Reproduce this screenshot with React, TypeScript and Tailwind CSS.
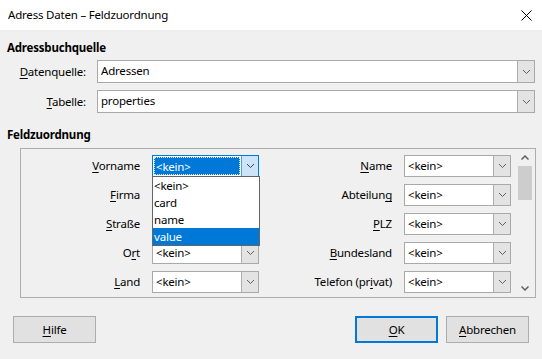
import React from 'react';

const font = { fontFamily: '"Noto Sans", "Liberation Sans", sans-serif' };

function Chevron({ color = '#606060' }: { color?: string }) {
  return (
    <svg width="9" height="6" viewBox="0 0 9 6">
      <path d="M1 1 L4.5 4.5 L8 1" fill="none" stroke={color} strokeWidth="1" />
    </svg>
  );
}

function Mn({ t, i }: { t: string; i: number }) {
  return (
    <>
      {t.slice(0, i)}
      <u className="underline-offset-2">{t[i]}</u>
      {t.slice(i + 1)}
    </>
  );
}

function Combo({ value, className = '' }: { value: string; className?: string }) {
  return (
    <div className={`flex h-[22px] border border-[#a9a9a9] bg-white ${className}`}>
      <div className="flex-1 pl-[3px] leading-[20px] truncate">{value}</div>
      <div className="w-[17px] flex items-center justify-center bg-[#e3e3e3] border-l border-[#adadad]">
        <Chevron />
      </div>
    </div>
  );
}

function OpenCombo() {
  return (
    <div className="relative w-[107px]">
      <div className="flex h-[22px] border border-[#0078d7] bg-white">
        <div className="flex-1 p-[1px]">
          <div className="h-full bg-[#0078d7] text-white leading-[18px] pl-[1px] border border-dotted border-[#d8e6f5]">
            &lt;kein&gt;
          </div>
        </div>
        <div className="w-[17px] flex items-center justify-center bg-[#cce4f7] border-l border-[#569de5]">
          <Chevron color="#404040" />
        </div>
      </div>
      <div className="absolute left-0 top-[21px] w-[108px] bg-white border border-[#646464] z-10">
        {['<kein>', 'card', 'name', 'value'].map((o) => (
          <div
            key={o}
            className={`h-[17px] leading-[17px] pl-[1px] ${o === 'value' ? 'bg-[#0078d7] text-white' : ''}`}
          >
            {o}
          </div>
        ))}
      </div>
    </div>
  );
}

const rows: [string, number, string, number][] = [
  ['Vorname', 0, 'Name', 0],
  ['Firma', 0, 'Abteilung', 8],
  ['Straße', 0, 'PLZ', 0],
  ['Ort', 1, 'Bundesland', 0],
  ['Land', 0, 'Telefon (privat)', 11],
];

function Btn({ children, primary }: { children: React.ReactNode; primary?: boolean }) {
  return (
    <div
      className={`w-[83px] h-[27px] flex items-center justify-center bg-[#e1e1e1] ${
        primary ? 'border-2 border-[#0078d7]' : 'border border-[#adadad]'
      }`}
    >
      {children}
    </div>
  );
}

export default function App() {
  return (
    <div
      className="w-[542px] h-[359px] text-[11.5px] tracking-[-0.2px] text-black overflow-hidden"
      style={font}
    >
      {/* Title bar */}
      <div className="h-[30px] bg-white flex items-center justify-between pl-[8px] pr-[10px]">
        <span>Adress Daten – Feldzuordnung</span>
        <svg width="11" height="11" viewBox="0 0 11 11">
          <path d="M0.5 0.5 L10.5 10.5 M10.5 0.5 L0.5 10.5" stroke="#000" strokeWidth="1" />
        </svg>
      </div>

      <div className="h-[329px] bg-[#f0f0f0] px-[7px] pt-[10px]">
        <div className="font-bold leading-[16px]">Adressbuchquelle</div>

        <div className="flex items-center mt-[4px]">
          <div className="w-[79px] text-right"><Mn t="Datenquelle:" i={0} /></div>
          <Combo value="Adressen" className="ml-[11px] flex-1 h-[23px]" />
        </div>
        <div className="flex items-center mt-[7px]">
          <div className="w-[79px] text-right"><Mn t="Tabelle:" i={0} /></div>
          <Combo value="properties" className="ml-[11px] flex-1 h-[23px]" />
        </div>

        <div className="font-bold leading-[16px] mt-[14px]">Feldzuordnung</div>

        <div className="ml-[13px] mt-[5px] w-[516px] h-[150px] border border-[#adadad] flex">
          <div className="flex flex-col gap-[7px] pt-[6px]">
            {rows.map(([l, li, r, ri], idx) => (
              <div key={l} className="flex items-center h-[22px]">
                <div className="w-[119px] text-right"><Mn t={l} i={li} /></div>
                <div className="ml-[12px]">
                  {idx === 0 ? (
                    <OpenCombo />
                  ) : (
                    // rows hidden under the open list carry no text
                    <Combo value={idx < 3 ? '' : '<kein>'} className="w-[107px]" />
                  )}
                </div>
                <div className="w-[133px] text-right"><Mn t={r} i={ri} /></div>
                <Combo value="<kein>" className="ml-[12px] w-[107px]" />
              </div>
            ))}
          </div>
          <div className="ml-[6px] w-[16px] flex flex-col">
            <div className="h-[17px] flex items-center justify-center">
              <svg width="8" height="5" viewBox="0 0 8 5">
                <path d="M0.5 4.5 L4 1 L7.5 4.5" fill="none" stroke="#606060" strokeWidth="1.5" />
              </svg>
            </div>
            <div className="h-[34px] bg-[#cdcdcd] mx-[1px]" />
            <div className="flex-1" />
            <div className="h-[17px] flex items-center justify-center">
              <svg width="8" height="5" viewBox="0 0 8 5">
                <path d="M0.5 0.5 L4 4 L7.5 0.5" fill="none" stroke="#606060" strokeWidth="1.5" />
              </svg>
            </div>
          </div>
        </div>

        <div className="flex items-center mt-[18px] pl-[6px] pr-[6px]">
          <Btn><Mn t="Hilfe" i={0} /></Btn>
          <div className="flex-1" />
          <Btn primary><Mn t="OK" i={0} /></Btn>
          <div className="ml-[8px]">
            <Btn><Mn t="Abbrechen" i={0} /></Btn>
          </div>
        </div>
      </div>
    </div>
  );
}
